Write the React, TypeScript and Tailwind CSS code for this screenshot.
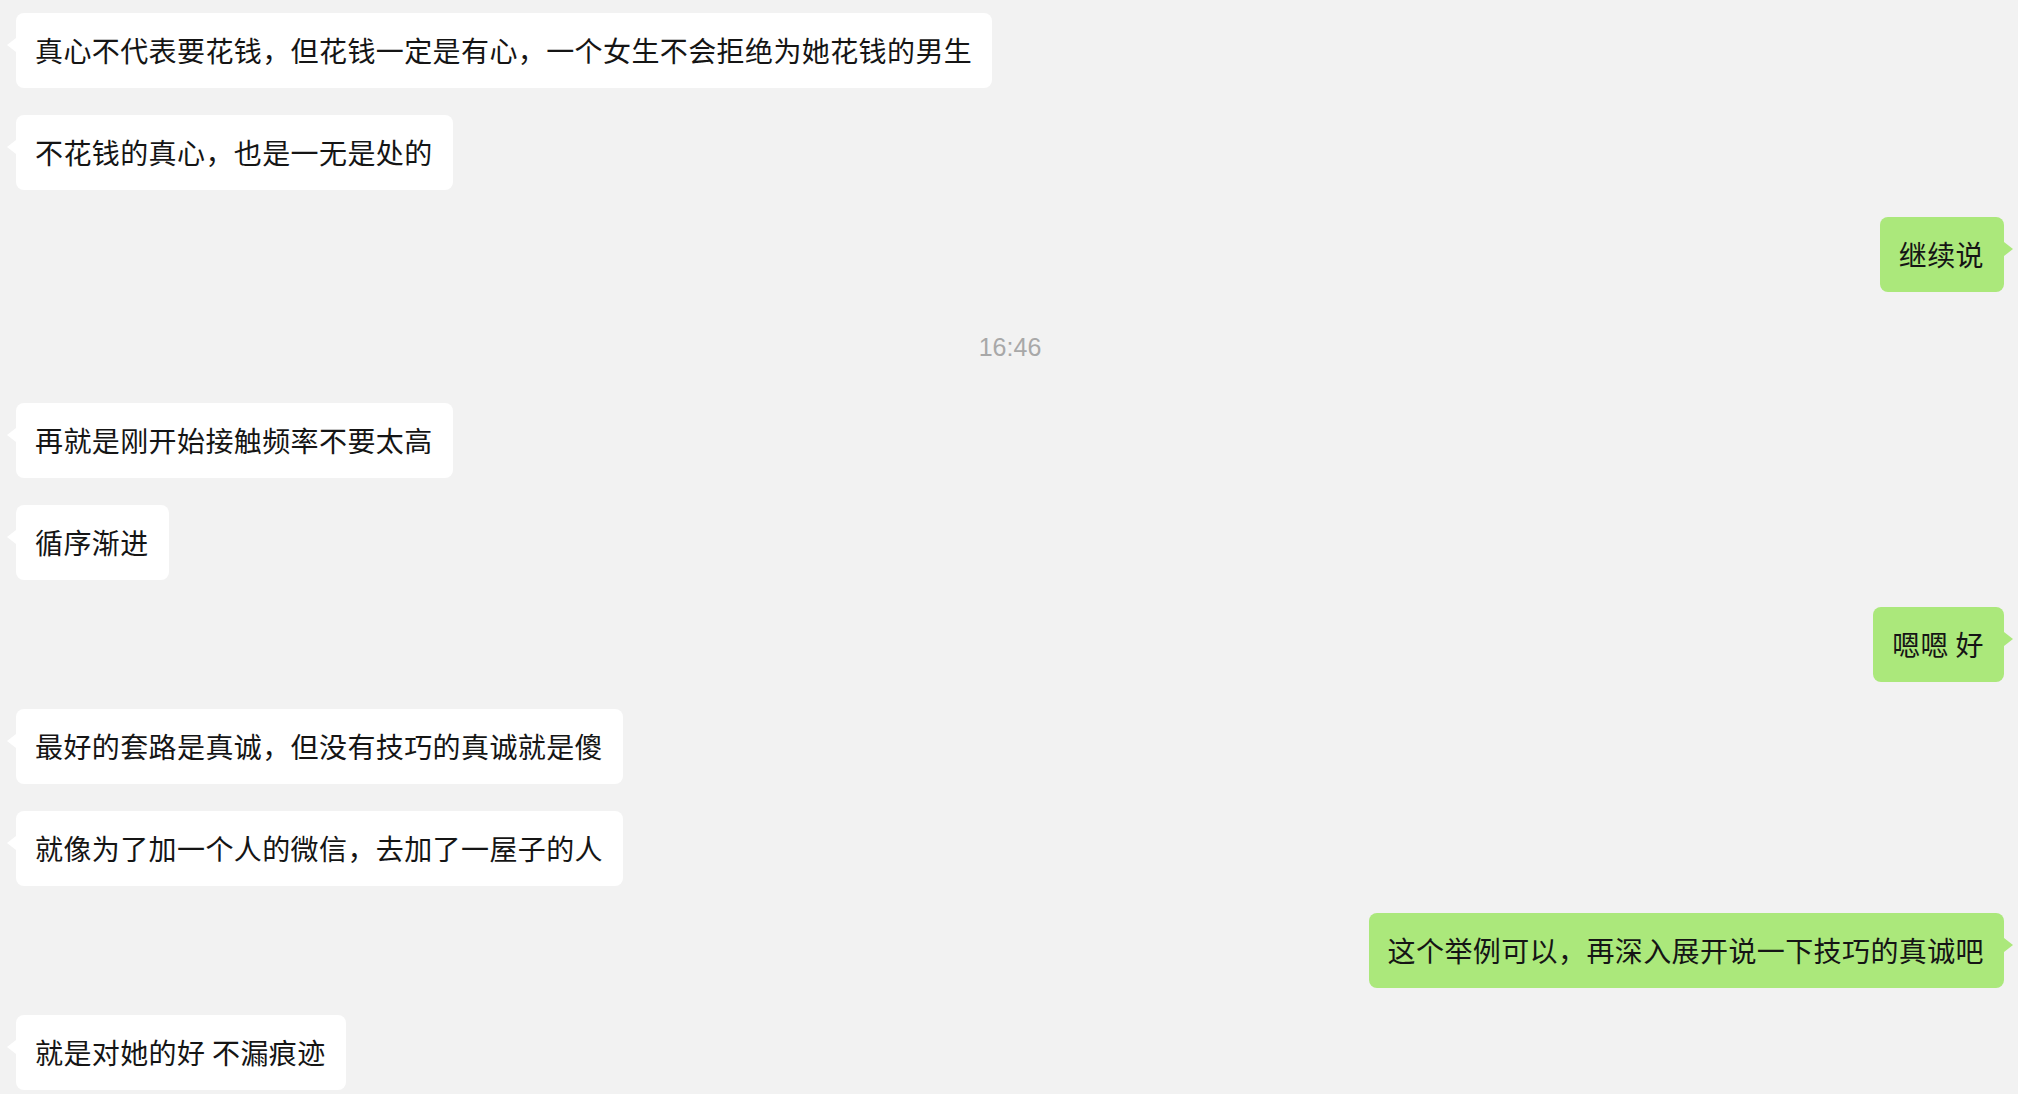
import React from 'react';

type Msg = { id: number; side?: 'left' | 'right'; text: string; time?: boolean };

const messages: Msg[] = [
    { id: 1, side: 'left', text: '真心不代表要花钱，但花钱一定是有心，一个女生不会拒绝为她花钱的男生' },
    { id: 2, side: 'left', text: '不花钱的真心，也是一无是处的' },
    { id: 3, side: 'right', text: '继续说' },
    { id: 4, text: '16:46', time: true },
    { id: 5, side: 'left', text: '再就是刚开始接触频率不要太高' },
    { id: 6, side: 'left', text: '循序渐进' },
    { id: 7, side: 'right', text: '嗯嗯 好' },
    { id: 8, side: 'left', text: '最好的套路是真诚，但没有技巧的真诚就是傻' },
    { id: 9, side: 'left', text: '就像为了加一个人的微信，去加了一屋子的人' },
    { id: 10, side: 'right', text: '这个举例可以，再深入展开说一下技巧的真诚吧' },
    { id: 11, side: 'left', text: '就是对她的好 不漏痕迹' },
];

function Bubble({ side, text }: { side: 'left' | 'right'; text: string }) {
    const isLeft = side === 'left';
    return (
        <div className={`flex ${isLeft ? 'justify-start' : 'justify-end'}`}>
            <div
                className={`relative rounded-lg pl-[19px] pr-5 py-[17px] text-[28px] leading-[41px] tracking-[0.4px] text-[#151515] whitespace-nowrap ${isLeft ? 'bg-white' : 'bg-[#abe87b]'}`}
            >
                {text}
                {/* 말풍선 꼬리 */}
                {isLeft ? (
                    <span className="absolute left-[-9px] top-[25px] w-0 h-0 border-y-[7px] border-y-transparent border-r-[9px] border-r-white" />
                ) : (
                    <span className="absolute right-[-9px] top-[25px] w-0 h-0 border-y-[7px] border-y-transparent border-l-[9px] border-l-[#abe87b]" />
                )}
            </div>
        </div>
    );
}

export default function App() {
    return (
        <div
            className="w-[2018px] h-[1094px] overflow-hidden bg-[#f2f2f2]"
            style={{ fontFamily: '"Noto Sans CJK SC", "Noto Sans", sans-serif' }}
        >
            <div className="flex flex-col gap-[27px] pt-[13px] pl-4 pr-[14px]">
                {messages.map((m) =>
                    m.time ? (
                        <div
                            key={m.id}
                            className="h-[57px] leading-[57px] text-center text-[25px] text-[#a8a8a8]"
                            style={{ fontFamily: '"Liberation Sans", Arial, sans-serif' }}
                        >
                            {m.text}
                        </div>
                    ) : (
                        <Bubble key={m.id} side={m.side!} text={m.text} />
                    )
                )}
            </div>
        </div>
    );
}
